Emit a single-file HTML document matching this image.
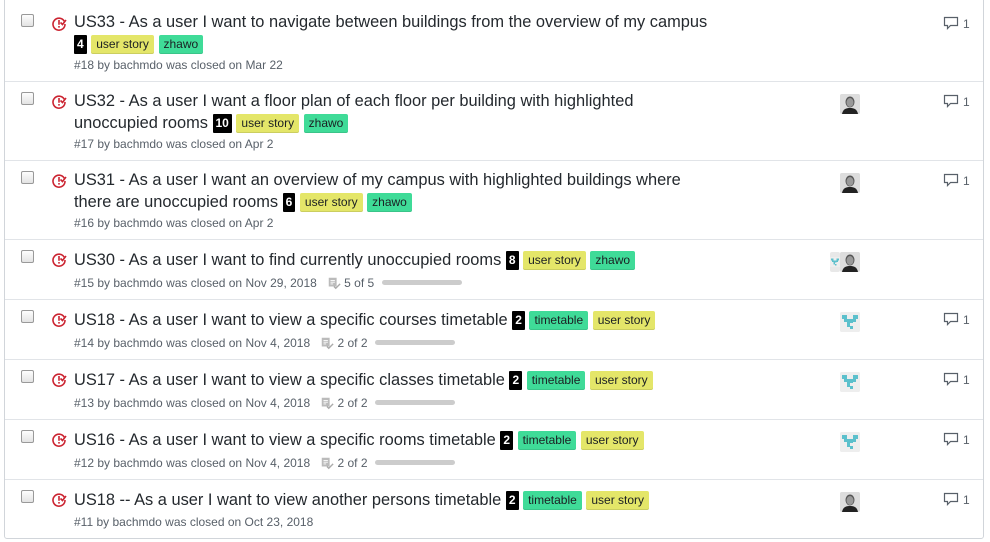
<!DOCTYPE html>
<html><head><meta charset="utf-8"><style>
*{box-sizing:border-box;margin:0;padding:0}
body{width:990px;height:542px;background:#fff;font-family:"Segoe UI","Liberation Sans","DejaVu Sans",sans-serif;color:#24292e;position:relative;overflow:hidden}
.box{position:absolute;left:4px;top:-10px;width:980px;height:549px;border:1px solid #d1d5da;border-radius:3px}
.sep{position:absolute;left:5px;width:978px;height:1px;background:#e1e4e8}
.cb{position:absolute;left:21px;width:13px;height:13px;border:1px solid #999;border-radius:2px;background:linear-gradient(#fdfdfd,#e3e3e3)}
.ic{position:absolute;left:51px;width:16px;height:16px}
.t{position:absolute;left:74px;width:680px;font-size:16.4px;line-height:21.5px;color:#24292e}
.n{display:inline-block;background:#000;color:#fff;font-weight:bold;font-size:12px;line-height:19px;height:19px;padding:0 3px;vertical-align:1px;border-radius:1px}
.l{display:inline-block;font-size:12px;line-height:19px;height:19px;padding:0 5px;border-radius:2px;vertical-align:1px;color:#1b1f23;box-shadow:inset 0 -1px 0 rgba(27,31,35,.12)}
.us{background:#e4e669}.zh{background:#3fdb98}
.m{position:absolute;left:74px;font-size:12px;color:#586069;white-space:nowrap}
.pb{display:inline-block;width:80px;height:5px;background:#ccc;border-radius:3px;vertical-align:2px;margin-left:4px}
.av{position:absolute;left:840px;width:20px;height:20px;border-radius:2px;background:#e8e8e8;overflow:hidden}
.cm{position:absolute;left:943px;font-size:12px;color:#586069}
.cm svg{vertical-align:-3px;margin-right:4px}
</style></head><body>
<div class="box"></div>
<div class="sep" style="top:81px"></div><div class="sep" style="top:160px"></div><div class="sep" style="top:239px"></div><div class="sep" style="top:299px"></div><div class="sep" style="top:359px"></div><div class="sep" style="top:419px"></div><div class="sep" style="top:479px"></div>

<svg width="0" height="0" style="position:absolute"><defs>
<symbol id="cl" viewBox="0 0 16 16"><path d="M13.2 5.2A6 6 0 1 0 14 8" fill="none" stroke="#cb2431" stroke-width="1.6"/><path d="M7.2 4h1.6v4.8H7.2zM7.2 10h1.6v1.6H7.2z" fill="#cb2431"/><path d="M9.5 6.5l2 2 3.5-4.5" fill="none" stroke="#cb2431" stroke-width="1.6"/></symbol>
<symbol id="fc" viewBox="0 0 20 20"><rect width="20" height="20" fill="#ddd"/><ellipse cx="10" cy="8" rx="4.5" ry="5.5" fill="#555"/><ellipse cx="10" cy="8.5" rx="3.5" ry="4.5" fill="#999"/><path d="M2 20c1-5 4-6 8-6s7 1 8 6z" fill="#222"/></symbol>
<symbol id="px" viewBox="0 0 20 20"><rect width="20" height="20" fill="#eee"/><g fill="#5cc0cc"><rect x="2" y="3" width="5" height="4"/><rect x="13" y="3" width="5" height="4"/><rect x="7" y="7" width="6" height="4"/><rect x="4" y="7" width="3" height="3"/><rect x="13" y="7" width="3" height="3"/><rect x="7" y="11" width="3" height="4"/><rect x="10" y="14" width="3" height="3"/></g></symbol>
<symbol id="co" viewBox="0 0 16 16"><path d="M1.5 2.5h13v8h-7l-3 3v-3h-3z" fill="none" stroke="#586069" stroke-width="1.2"/></symbol>
<symbol id="tk" viewBox="0 0 16 16"><path d="M2 2h9v10H2z" fill="#bbb"/><path d="M4 5h5M4 7h5M4 9h3" stroke="#fff"/><path d="M8 12l2 2 5-5" fill="none" stroke="#aaa" stroke-width="1.6"/></symbol>
</defs></svg>

<div class="cb" style="top:14px"></div><svg class="ic" style="top:16px"><use href="#cl"/></svg>
<div class="t" style="top:12px">US33 - As a user I want to navigate between buildings from the overview of my campus<br><span class="n">4</span> <span class="l us">user story</span> <span class="l zh">zhawo</span></div>
<div class="m" style="top:58px">#18 by bachmdo was closed on Mar 22</div>
<div class="cm" style="top:15px"><svg width="16" height="16"><use href="#co"/></svg>1</div>

<div class="cb" style="top:92px"></div><svg class="ic" style="top:94px"><use href="#cl"/></svg>
<div class="t" style="top:91px">US32 - As a user I want a floor plan of each floor per building with highlighted<br>unoccupied rooms <span class="n">10</span> <span class="l us">user story</span> <span class="l zh">zhawo</span></div>
<div class="m" style="top:137px">#17 by bachmdo was closed on Apr 2</div>
<svg class="av" style="top:94px"><use href="#fc"/></svg>
<div class="cm" style="top:93px"><svg width="16" height="16"><use href="#co"/></svg>1</div>

<div class="cb" style="top:171px"></div><svg class="ic" style="top:173px"><use href="#cl"/></svg>
<div class="t" style="top:170px">US31 - As a user I want an overview of my campus with highlighted buildings where<br>there are unoccupied rooms <span class="n">6</span> <span class="l us">user story</span> <span class="l zh">zhawo</span></div>
<div class="m" style="top:216px">#16 by bachmdo was closed on Apr 2</div>
<svg class="av" style="top:173px"><use href="#fc"/></svg>
<div class="cm" style="top:172px"><svg width="16" height="16"><use href="#co"/></svg>1</div>

<div class="cb" style="top:250px"></div><svg class="ic" style="top:252px"><use href="#cl"/></svg>
<div class="t" style="top:250px">US30 - As a user I want to find currently unoccupied rooms <span class="n">8</span> <span class="l us">user story</span> <span class="l zh">zhawo</span></div>
<div class="m" style="top:276px">#15 by bachmdo was closed on Nov 29, 2018 &nbsp;&nbsp;<svg width="14" height="14" style="vertical-align:-3px"><use href="#tk"/></svg> 5 of 5 <span class="pb"></span></div>
<svg class="av" style="top:252px;left:830px;width:10px"><use href="#px"/></svg><svg class="av" style="top:252px"><use href="#fc"/></svg>

<div class="cb" style="top:310px"></div><svg class="ic" style="top:312px"><use href="#cl"/></svg>
<div class="t" style="top:310px">US18 - As a user I want to view a specific courses timetable <span class="n">2</span> <span class="l zh">timetable</span> <span class="l us">user story</span></div>
<div class="m" style="top:336px">#14 by bachmdo was closed on Nov 4, 2018 &nbsp;&nbsp;<svg width="14" height="14" style="vertical-align:-3px"><use href="#tk"/></svg> 2 of 2 <span class="pb"></span></div>
<svg class="av" style="top:312px"><use href="#px"/></svg>
<div class="cm" style="top:311px"><svg width="16" height="16"><use href="#co"/></svg>1</div>

<div class="cb" style="top:370px"></div><svg class="ic" style="top:372px"><use href="#cl"/></svg>
<div class="t" style="top:370px">US17 - As a user I want to view a specific classes timetable <span class="n">2</span> <span class="l zh">timetable</span> <span class="l us">user story</span></div>
<div class="m" style="top:396px">#13 by bachmdo was closed on Nov 4, 2018 &nbsp;&nbsp;<svg width="14" height="14" style="vertical-align:-3px"><use href="#tk"/></svg> 2 of 2 <span class="pb"></span></div>
<svg class="av" style="top:372px"><use href="#px"/></svg>
<div class="cm" style="top:371px"><svg width="16" height="16"><use href="#co"/></svg>1</div>

<div class="cb" style="top:430px"></div><svg class="ic" style="top:432px"><use href="#cl"/></svg>
<div class="t" style="top:430px">US16 - As a user I want to view a specific rooms timetable <span class="n">2</span> <span class="l zh">timetable</span> <span class="l us">user story</span></div>
<div class="m" style="top:456px">#12 by bachmdo was closed on Nov 4, 2018 &nbsp;&nbsp;<svg width="14" height="14" style="vertical-align:-3px"><use href="#tk"/></svg> 2 of 2 <span class="pb"></span></div>
<svg class="av" style="top:432px"><use href="#px"/></svg>
<div class="cm" style="top:431px"><svg width="16" height="16"><use href="#co"/></svg>1</div>

<div class="cb" style="top:490px"></div><svg class="ic" style="top:492px"><use href="#cl"/></svg>
<div class="t" style="top:490px">US18 -- As a user I want to view another persons timetable <span class="n">2</span> <span class="l zh">timetable</span> <span class="l us">user story</span></div>
<div class="m" style="top:515px">#11 by bachmdo was closed on Oct 23, 2018</div>
<svg class="av" style="top:492px"><use href="#fc"/></svg>
<div class="cm" style="top:491px"><svg width="16" height="16"><use href="#co"/></svg>1</div>
</body></html>
